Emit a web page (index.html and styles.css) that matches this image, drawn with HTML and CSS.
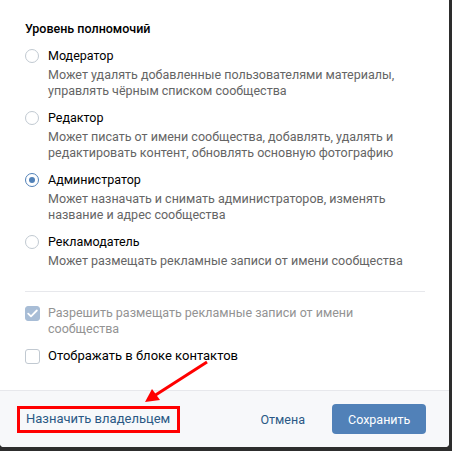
FILE: index.html
```html
<!DOCTYPE html>
<html lang="ru">

<head>
    <meta charset="UTF-8">
    <meta name="viewport" content="width=device-width, initial-scale=1.0">
    <title>Уровень полномочий</title>
    <link rel="stylesheet" href="styles.css">
</head>

<body>
    <div class="modal">
        <div class="modal-body">
            <div class="section-title">Уровень полномочий</div>

            <div class="radio-list">
                <div class="radio">
                    <span class="radio-circle"></span>
                    <div class="radio-text">
                        <div class="radio-label">Модератор</div>
                        <div class="radio-desc">Может удалять добавленные пользователями материалы, управлять чёрным списком сообщества</div>
                    </div>
                </div>
                <div class="radio">
                    <span class="radio-circle"></span>
                    <div class="radio-text">
                        <div class="radio-label">Редактор</div>
                        <div class="radio-desc">Может писать от имени сообщества, добавлять, удалять и редактировать контент, обновлять основную фотографию</div>
                    </div>
                </div>
                <div class="radio on">
                    <span class="radio-circle"></span>
                    <div class="radio-text">
                        <div class="radio-label">Администратор</div>
                        <div class="radio-desc">Может назначать и снимать администраторов, изменять название и адрес сообщества</div>
                    </div>
                </div>
                <div class="radio">
                    <span class="radio-circle"></span>
                    <div class="radio-text">
                        <div class="radio-label">Рекламодатель</div>
                        <div class="radio-desc">Может размещать рекламные записи от имени сообщества</div>
                    </div>
                </div>
            </div>

            <div class="divider"></div>

            <div class="check-list">
                <div class="check checked disabled">
                    <span class="check-box">
                        <svg width="11" height="9" viewBox="0 0 11 9"><path d="M1.2 4.6 L4 7.3 L9.8 1.5" fill="none" stroke="#fff" stroke-width="1.8" stroke-linecap="round" stroke-linejoin="round"/></svg>
                    </span>
                    <span class="check-label">Разрешить размещать рекламные записи от имени сообщества</span>
                </div>
                <div class="check">
                    <span class="check-box"></span>
                    <span class="check-label">Отображать в блоке контактов</span>
                </div>
            </div>
        </div>

        <div class="modal-footer">
            <a class="owner-link">Назначить владельцем</a>
            <div class="actions">
                <button class="btn-cancel">Отмена</button>
                <button class="btn-save">Сохранить</button>
            </div>
        </div>
    </div>

    <!-- пометка поверх скриншота -->
    <svg class="annotation" width="452" height="451" viewBox="0 0 452 451">
        <line x1="207" y1="362" x2="154" y2="396" stroke="#f00" stroke-width="3"/>
        <polygon points="145,402 152,389 160,400" fill="#f00"/>
        <rect x="18.5" y="407.5" width="160" height="24" fill="none" stroke="#f00" stroke-width="3"/>
    </svg>
</body>

</html>
```

FILE: styles.css
```css
body {
    margin: 0;
    width: 452px;
    height: 451px;
    background: #2d2d2d;
    font-family: Roboto, "Open Sans", Arial, sans-serif;
    font-size: 12.5px;
    line-height: 16px;
    color: #000;
    position: relative;
    overflow: hidden;
}

/* окно */
.modal {
    width: 449px;
    height: 447px;
    background: #fff;
    border-radius: 0 0 4px 4px;
    display: flex;
    flex-direction: column;
    overflow: hidden;
}

.modal-body {
    flex: 1;
    padding: 21px 24px 0 25px;
}

.section-title {
    font-weight: 500;
    margin-bottom: 11px;
}

/* радиокнопки */
.radio-list {
    display: flex;
    flex-direction: column;
    gap: 11px;
}

.radio {
    display: flex;
    gap: 9px;
}

.radio-circle {
    flex: none;
    box-sizing: border-box;
    width: 14px;
    height: 14px;
    margin-top: 1px;
    border: 1px solid #c1c9d1;
    border-radius: 50%;
    display: flex;
    align-items: center;
    justify-content: center;
}

.radio.on .radio-circle {
    border-color: #5181b8;
}

.radio.on .radio-circle::after {
    content: "";
    width: 6px;
    height: 6px;
    border-radius: 50%;
    background: #5181b8;
}

.radio-desc {
    margin-top: 3px;
    color: #656565;
}

.divider {
    height: 1px;
    background: #e7e8ec;
    margin: 22px 0 13px;
}

/* чекбоксы */
.check-list {
    display: flex;
    flex-direction: column;
    gap: 11px;
}

.check {
    display: flex;
    gap: 8px;
}

.check-box {
    flex: none;
    box-sizing: border-box;
    width: 15px;
    height: 15px;
    margin-top: 1px;
    border: 1px solid #c1c9d1;
    border-radius: 3px;
    display: flex;
    align-items: center;
    justify-content: center;
}

.check .check-label {
    font-size: 13px;
}

.check.checked .check-box {
    background: #a8bdd6;
    border-color: #a8bdd6;
}

.check.disabled .check-label {
    color: #939393;
    font-size: 12.5px;
}

/* нижняя панель */
.modal-footer {
    height: 56px;
    border-top: 1px solid #e7e8ec;
    background: #f7f8fa;
    display: flex;
    align-items: center;
    justify-content: space-between;
    padding: 0 23px 0 26px;
}

.owner-link {
    color: #2a5885;
    font-size: 13px;
    cursor: pointer;
}

.actions {
    display: flex;
    align-items: center;
    gap: 11px;
}

button {
    font-family: inherit;
    font-size: 12.5px;
    border: none;
    cursor: pointer;
    border-radius: 4px;
    height: 30px;
    padding: 0 16px;
}

.btn-cancel {
    background: none;
    color: #2a5885;
}

.btn-save {
    width: 94px;
    background: #5181b8;
    color: #fff;
}

.annotation {
    position: absolute;
    left: 0;
    top: 0;
    pointer-events: none;
}
```
